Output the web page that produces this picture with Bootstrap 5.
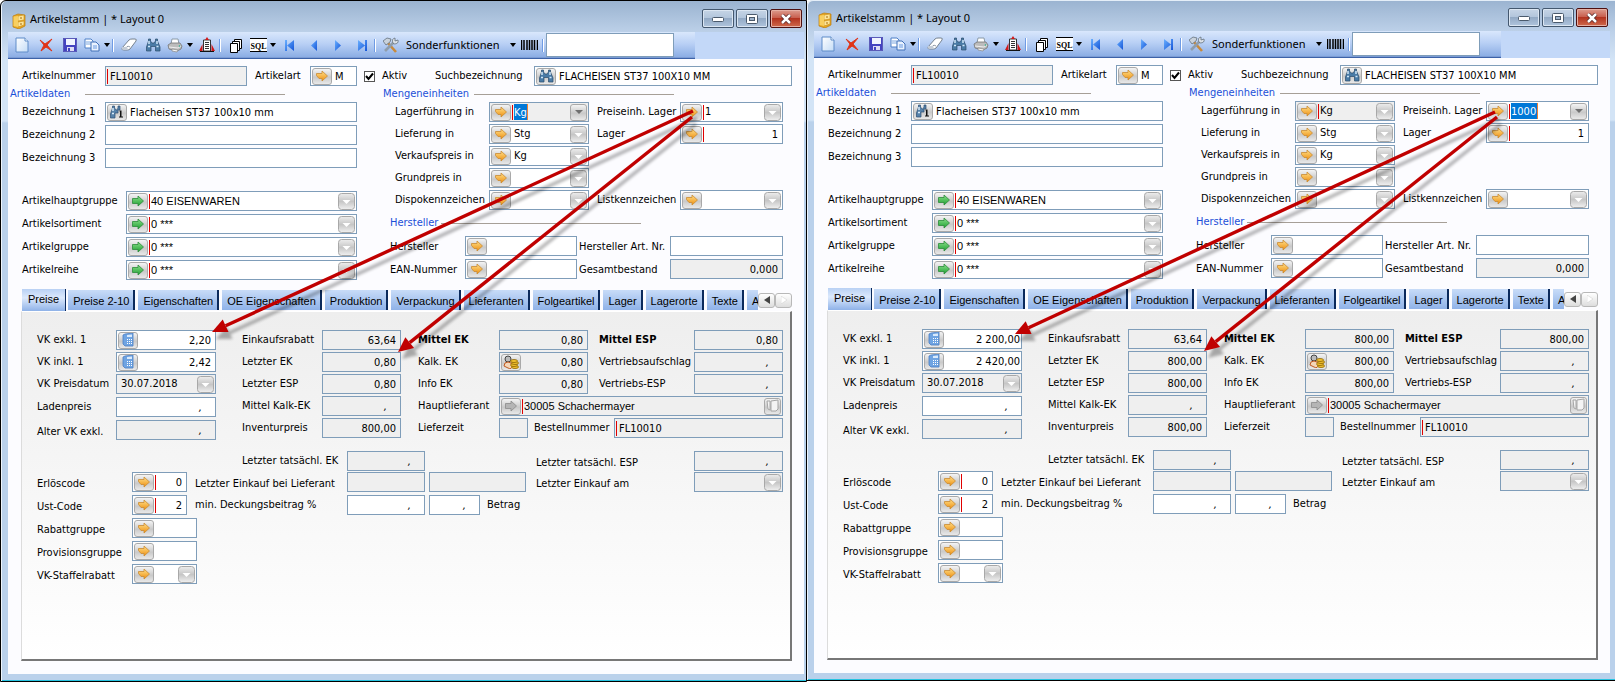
<!DOCTYPE html>
<html lang="de">
<head>
<meta charset="utf-8">
<meta name="viewport" content="width=device-width, initial-scale=1">
<title>Artikelstamm</title>
<link href="https://cdn.jsdelivr.net/npm/bootstrap@5.3.0/dist/css/bootstrap.min.css" rel="stylesheet">
<style>
body{font:11px/14px "DejaVu Sans Condensed","DejaVu Sans",sans-serif;color:#000;background:#fff}
label{white-space:nowrap}
button{font:inherit;color:inherit;padding:0;background:none;border:0}
.desk{display:grid;grid-template-columns:minmax(0,807fr) minmax(0,808fr);min-height:100vh}
.win{background:linear-gradient(#9ab3d0,#bdd1e9 32px,#d3e4f6 60px,#d3e4f6 120px,#bad1eb 122px);position:relative;border-bottom:1px solid #000}
.win-a{border-top:1px solid #000;border-left:1px solid #000;border-right:1px solid #000;padding:0 2px 0 7px;border-radius:6px 0 0 0;box-shadow:inset 1px 0 #eef5fc,inset 0 -1px #27c3e0}
.win-b{padding:0 5px 0 7px;margin-bottom:1px;box-shadow:inset 1px 0 #eef5fc,inset 0 1px #e4eef8,inset 0 -1px #27c3e0;border-radius:6px 0 0 0}
.win-body{background:#fcfcff;margin-bottom:7px}
.bar-title{height:31px;padding:8px 2px 0 4px;font:11px/20px "Noto Sans",sans-serif}
.capt{width:32px;height:19px;border:1px solid #44586f;border-radius:2px;background:linear-gradient(#c6d5e6,#b3c6dc 45%,#93aac5 50%,#b0c5dd);box-shadow:inset 0 0 0 1px #dbe6f2;display:grid;place-items:center}
.capt-x{border-color:#4e1010;background:linear-gradient(#dc9c8e,#c9604f 45%,#b33420 50%,#cf6a4c);box-shadow:inset 0 0 0 1px #e6b0a4}
.capts{gap:2px}
.tools{background:#c3d8f8;height:27px}
.strip{width:687px;background:linear-gradient(#d9e7fc,#b9d0f5 45%,#88abe3);border-bottom:1px solid #3c62a8;padding-left:2px;box-shadow:inset 0 -1px #7c9cd4}
.tb{width:24px;height:26px;display:grid;place-items:center;flex:none}
.tb-n{width:20px}.tb-c{width:10px}
.tsep{width:5px;height:13px;flex:none;border-left:1px solid #6f9be4;box-shadow:inset 1px 0 #fff}
.tb-text{font:11px/24px "Noto Sans",sans-serif;padding:0 8px 0 3px}
.tb-search{width:128px;height:24px;border:1px solid #7f9db9;background:#fff;margin-left:-1px;padding:0 4px}
.tri{width:0;height:0;border:3px solid transparent;border-top:4px solid #000;border-bottom:0}
.rw{display:grid;align-items:center;min-height:20px}
.stack2{display:grid;row-gap:2px}.stack3{display:grid;row-gap:3px}
.r-top{grid-template-columns:83px 142fr 63px 47px 25px 53px 99px 258fr;padding:0 12px 0 14px;margin-top:7px}
.upper{display:grid;grid-template-columns:347fr 400fr;column-gap:26px;padding:0 21px 0 2px;align-items:start}
.r-b{grid-template-columns:83px 1fr;padding-left:12px}
.r-g{grid-template-columns:104px 1fr;padding-left:12px}
.r-m{grid-template-columns:94px 100fr 91px 103fr;padding-left:12px}
.r-h{grid-template-columns:75px 112fr 93px 113fr;padding-left:7px}
.r-h label{padding-top:2px}
.hd{display:flex;align-items:center;height:16px;color:#1b4fd8}
.hd::after{content:"";width:200px;border-top:1px solid #a69f97}
.hd span{width:75px}.hd-m span{width:91px}
.hd-h{height:26px;padding-left:7px}.hd-h span{width:51px}
.gap-rows{margin-top:23px}
.g8{padding-left:8px}.g2{padding-left:2px}.g11{padding-left:11px}.g6{padding-left:6px}.g10{padding-left:10px}.g7{padding-left:7px}
.fld{display:flex;align-items:center;height:20px;border:1px solid #7f9db9;background:#fff;min-width:0;padding:0 1px}
.fld-ro{background:#efefef}
.fld input,.fld select{flex:1 1 0;min-width:0;width:0;height:16px;border:0;background:transparent;padding:0 3px;font:inherit;color:#000;outline:0;appearance:none}
.fld select{background:no-repeat right center/17px 17px url("data:image/svg+xml,%3Csvg xmlns='http://www.w3.org/2000/svg' viewBox='0 0 17 17'%3E%3Cdefs%3E%3ClinearGradient id='g' x2='0' y2='1'%3E%3Cstop stop-color='%23ededed'/%3E%3Cstop offset='.5' stop-color='%23c6c6c6'/%3E%3Cstop offset='1' stop-color='%23f0f0f0'/%3E%3C/linearGradient%3E%3C/defs%3E%3Crect x='.5' y='.5' width='16' height='16' rx='3' fill='url(%23g)' stroke='%23a8a8a8'/%3E%3Cpath d='M4.500 7h8L8.500 11z' fill='%23fff'/%3E%3C/svg%3E");height:17px}
.fld-num input{text-align:right}
.fld-edge input{padding-right:0}
.fld-comma input{text-align:right;padding-right:12px;font-style:italic}
.fld-ar{font-family:"Liberation Sans",sans-serif}
.rb{width:1px;height:15px;background:#e00000;flex:none;margin-left:1px}
.rb + input,.rb + select{padding-left:1px}
.rb-first{margin-left:0}
.rb-first + input{padding-left:2px}
.ib,.ddb{flex:none;width:20px;height:17px;border:1px solid #a9a9a9;border-radius:3px;background:linear-gradient(#f4f4f4,#c9c9c9 55%,#e9e9e9);display:grid;place-items:center}
.ddb{width:17px;margin-left:auto}
.ddb .tri{border-top-color:#707070;border-width:4px 4px 0}
.fld .marked{flex:none;width:auto;background:#0078d7;color:#fff;padding:0;border-right:1px solid #f08030;margin-left:1px}
.chk{width:11px;height:11px;margin:0 auto;appearance:none;border:1px solid #555;background:#fff;display:block}
.chk:checked{background:#fff url("data:image/svg+xml,%3Csvg xmlns='http://www.w3.org/2000/svg' viewBox='0 0 9 9'%3E%3Cpath d='M1 4l2.500 3L8 1.500' fill='none' stroke='%23000' stroke-width='2'/%3E%3C/svg%3E")}
.tabs-row{margin:9px 12px 0 14px;height:22px}
.tabbar{overflow:hidden;gap:3px;font:11px/16px "Liberation Sans",sans-serif}
.tabx{flex:none;height:20px;padding:3px 4px 1px 5px;background:linear-gradient(#c8dcf8,#8fb2e8);border-right:2px solid #0b2a5c;white-space:nowrap}
.tabx-on{height:22px;align-self:flex-start;padding:2px 6px 4px 6px;background:linear-gradient(#b9d1f4,#dce9fc 40%,#8fb2e8);border-right-width:1px;margin-right:-1px}
.tscroll{width:17px;height:15px;border:1px solid #b8b8b8;border-radius:3px;background:linear-gradient(#fff,#ddd);display:grid;place-items:center}
.panel{margin:0 12px 13px 13px;border:1px solid #dcdcdc;border-right:2px solid #777;border-bottom:2px solid #777;border-top:1px solid #fff;background:linear-gradient(#eee,#fff);padding:18px 7px 20px 15px}
.prices{display:grid;grid-template-columns:179fr 26px 159fr 17px 365fr;align-items:start}
.p1{grid-template-columns:79px 1fr}.p2{grid-template-columns:80px 1fr}
.p3{grid-template-columns:81px 89fr 106px 89fr}.p3w{grid-template-columns:81px 1fr}.p3l{grid-template-columns:81px 29px 86px 1fr}
.p1:nth-child(n+4){margin-top:1px}
.lower{margin-top:11px}
.l1{grid-template-columns:310px 78px 269px 1fr;margin-bottom:1px}.l1 label:first-child{padding-left:205px}.l1 label:nth-of-type(2){padding:4px 0 0 111px}
.l2{grid-template-columns:95px 55px 160px 78px 101px 168px 1fr}
.l2 label{padding-top:4px}
.l3{grid-template-columns:95px 55px 160px 78px 55px 1fr}
.l4{grid-template-columns:95px 65px}
.l3 label:first-child,.l4 label{padding-top:4px}
.ml-f{margin-left:4px}
.arrows{position:absolute;left:0;top:0;width:100%;height:100%;pointer-events:none;overflow:visible}
</style>
</head>
<body>
<svg width="0" height="0" class="position-absolute" aria-hidden="true">
<defs>
<linearGradient id="gold" x2="0" y2="1"><stop stop-color="#ffe08a"/><stop offset="1" stop-color="#ee8f10"/></linearGradient>
<linearGradient id="green" x2="0" y2="1"><stop stop-color="#8be08b"/><stop offset="1" stop-color="#1fa032"/></linearGradient>
<linearGradient id="blue" x2="1" y2="1"><stop stop-color="#6ab0ff"/><stop offset="1" stop-color="#1455d8"/></linearGradient>
<linearGradient id="paper" x2="1" y2="1"><stop stop-color="#fff"/><stop offset="1" stop-color="#c4dcf6"/></linearGradient>
<filter id="soft" x="-10%" y="-10%" width="120%" height="120%"><feGaussianBlur stdDeviation="1.5"/></filter>
<symbol id="i-or" viewBox="0 0 14 12"><path d="M1.500 3.500H7V1l5.500 5L7 11V8.500H4L1.500 5.500z" fill="url(#gold)" stroke="#c98a34" stroke-width=".8"/></symbol>
<symbol id="i-gr" viewBox="0 0 14 12"><path d="M1.500 3.500H7V1l5.500 5L7 11V8.500H1.500z" fill="url(#green)" stroke="#2b8a3a" stroke-width=".8"/></symbol>
<symbol id="i-ga" viewBox="0 0 14 12"><path d="M1.500 3.500H7V1l5.500 5L7 11V8.500H1.500z" fill="#b5b5b5" stroke="#8b8b8b" stroke-width=".8"/></symbol>
<symbol id="i-bino" viewBox="0 0 16 14"><path d="M3.500 1h2v2l1.500 2h2l1.500-2V1h2v2l2.500 6v4h-4.500V8.500H6V13H1.500V9l2-6z" fill="#4a7ba6" stroke="#2a4a6a" stroke-width=".7"/><path d="M3 8.500h2M11.500 8.500h2M4 3v3M12 3v3" stroke="#cfe6f8" stroke-width="1.500"/></symbol>
<symbol id="i-bino1" viewBox="0 0 16 14"><path d="M3.500 1h2v2l1.500 2h1l1-2V1h2v4H9v3H6v5H1.500V9l2-6z" fill="#5682aa" stroke="#2c4f74" stroke-width=".7"/><path d="M3 8.500h2M4 3v3" stroke="#d8ebfa" stroke-width="1.500"/><path d="M10.500 5.500h2v6H14v1h-4v-1h1v-5h-.5z" fill="#111"/></symbol>
<symbol id="i-calc" viewBox="0 0 14 14"><path d="M4 1l8-1v13H4L2 11V2z" fill="#6fa4e2" stroke="#4a7ec4" stroke-width=".8"/><path d="M6 2l5-.5v2.500H6z" fill="#d9eafc"/><path d="M6 6.500h5M6 8.500h5M6 10.500h5" stroke="#fff" stroke-dasharray="1 1"/></symbol>
<symbol id="i-coin" viewBox="0 0 16 14"><circle cx="5" cy="4" r="3" fill="#bbb" stroke="#444"/><path d="M1 11q0-4 4-4t4 4-4 2-4-2z" fill="#f3d5b8" stroke="#c05a20"/><g fill="#f2c230" stroke="#8d6504" stroke-width=".8"><ellipse cx="12" cy="12" rx="3.500" ry="1.500"/><ellipse cx="11" cy="10" rx="3.500" ry="1.500"/><ellipse cx="12" cy="8" rx="3.500" ry="1.500"/><ellipse cx="11" cy="6" rx="3.500" ry="1.500"/></g></symbol>
<symbol id="i-book" viewBox="0 0 14 14"><path d="M1 2h3v9L2 10zM5 2l7-1v9l-2 2H5z" fill="#f4f4f4" stroke="#a5a5a5"/></symbol>
<symbol id="i-app" viewBox="0 0 14 16"><path d="M1 3l5-2 7 1v11l-6 3-6-2z" fill="#e9a820" stroke="#b87a10" stroke-width=".7"/><path d="M6 3l6-1v5l-6 1zM6 9l6-1v4l-6 2z" fill="#fde59a" stroke="#c98d18" stroke-width=".6"/><path d="M8 5h2M8 11h2" stroke="#a66a08"/><path d="M1.500 3.500L6 3v11l-4.500-1z" fill="#f8cf60"/></symbol>
<symbol id="i-new" viewBox="0 0 14 16"><path d="M1 1h9l3 3v11H1z" fill="url(#paper)" stroke="#5f8cc8"/><path d="M10 1v3h3" fill="#fff" stroke="#5f8cc8"/></symbol>
<symbol id="i-del" viewBox="0 0 14 14"><path d="M1 2l5 4 7-5-5 6 5 6-6-4-5 4 3-6z" fill="#e03418" stroke="#e03418"/></symbol>
<symbol id="i-save" viewBox="0 0 14 14"><path d="M0 0h14v14H0z" fill="#4343c0"/><path d="M3 1h9v6H3z" fill="#f0f4ff"/><path d="M4 9h7v5H4z" fill="#dcdcf4"/><path d="M5 10h2v3H5z" fill="#4343c0"/><path d="M.5.5h13v13H.5z" fill="none" stroke="#5b5bb8"/></symbol>
<symbol id="i-copy" viewBox="0 0 16 14"><path d="M1 1h6l2 2v7H1z" fill="#fff" stroke="#4f80c8"/><path d="M2 4h5M2 6h5" stroke="#7ba6e0"/><path d="M7 4h5l3 3v6H7z" fill="#e9f2ff" stroke="#4070b8"/><path d="M9 8h4M9 10h4" stroke="#6a9ae0"/></symbol>
<symbol id="i-erase" viewBox="0 0 16 14"><path d="M1 10l7-8q1-1 3-1h3q2 0 1 2l-6 8q-1 1-3 1H3q-3 0-2-2z" fill="#fff" stroke="#76828f"/><path d="M1 9q3 0 5-.5L7 12H3q-3 0-2-3z" fill="#c4ccd6"/><path d="M6 8.500q2-.5 3 .500" fill="none" stroke="#8d98a6"/></symbol>
<symbol id="i-print" viewBox="0 0 16 15"><path d="M5 1h6l1 5H4z" fill="#fff" stroke="#8a9aa8"/><path d="M1 7l3-2h9l2 3-1 3-4 2-8-2z" fill="#bcbcbc" stroke="#757575" stroke-width=".8"/><path d="M2 9l9 1 3-2" fill="none" stroke="#eee"/><path d="M5 11l6 1-1 2-5-1z" fill="#f4f4f4" stroke="#888" stroke-width=".7"/><circle cx="12.500" cy="8" r=".8" fill="#2a8"/></symbol>
<symbol id="i-rep" viewBox="0 0 16 16"><path d="M4.500 3h7v11h-7z" fill="#fff" stroke="#333"/><path d="M8 0l2 3H6z" fill="#d21818"/><path d="M6 5.500h4M6 7.500h4M6 9.500h4M6 11.500h4" stroke="#333"/><path d="M3.500 7v7H0zM12.500 7v7H16z" fill="#d21818"/><path d="M1 14.500h14" stroke="#111"/></symbol>
<symbol id="i-stack" viewBox="0 0 14 15"><g fill="#fff" stroke="#000"><path d="M5.500 1.500h7v9h-7z"/><path d="M3.500 3.500h7v9h-7z"/><path d="M1.500 5.500h7v9h-7z"/></g></symbol>
<symbol id="i-bar" viewBox="0 0 17 10"><path d="M.5 0v10M3 0v10M6 0v10M8.500 0v10M11 0v10M13.500 0v10M16.500 0v10" stroke="#000" stroke-width="1.500"/></symbol>
<symbol id="i-prev" viewBox="0 0 10 13"><path d="M8 1v11L2 6.500z" fill="url(#blue)"/></symbol>
<symbol id="i-next" viewBox="0 0 10 13"><path d="M2 1v11l6-5.500z" fill="url(#blue)"/></symbol>
<symbol id="i-first" viewBox="0 0 10 13"><path d="M0 1h2v11H0zM9 1v11L2 6.500z" fill="url(#blue)"/></symbol>
<symbol id="i-last" viewBox="0 0 10 13"><path d="M8 1h2v11H8zM1 1v11l7-5.500z" fill="url(#blue)"/></symbol>
<symbol id="i-tool" viewBox="0 0 16 16"><path d="M4 5l9 10" stroke="#c88a3c" stroke-width="2.600"/><path d="M0 4l4-3 4 1-1 3-4 3z" fill="#c9d2dc" stroke="#66727f" stroke-width=".8"/><path d="M2 14L11 5" stroke="#8f9dab" stroke-width="2.600"/><path d="M10 6q-2-4 2-5l0 3 3-1q1 4-4 4z" fill="#dbe1e8" stroke="#66727f" stroke-width=".8"/></symbol>
</defs>
</svg>
<main class="desk" id="desk"></main>

<script>
const esc = s => String(s).replace(/&/g, '&amp;').replace(/"/g, '&quot;');
const svg = (n, w, h) => `<svg width="${w}" height="${h}" aria-hidden="true"><use href="#i-${n}"/></svg>`;
const iconSize = {or: [14, 12], gr: [14, 12], ga: [14, 12], bino: [16, 14], bino1: [16, 14], calc: [14, 14], coin: [16, 14]};

// One bordered field: optional icon button, red marker, value, optional drop-down.
function field(id, o = {}) {
  const cls = ['fld', o.ro && 'fld-ro', o.num && 'fld-num', o.edge && 'fld-edge', o.v === ',' && 'fld-comma', o.ar && 'fld-ar', o.cls].filter(Boolean).join(' ');
  const v = esc(o.v || '');
  let h = `<div class="${cls}">`;
  if (o.ic) h += `<button type="button" class="ib" aria-label="Auswahl">${svg(o.ic, ...iconSize[o.ic])}</button>`;
  if (o.bar) h += `<i class="rb${o.ic ? '' : ' rb-first'}"></i>`;
  if (o.mark) h += `<input id="${id}" class="marked" value="${v}" style="width:${Math.round(v.length * 6.5) + 1}px"><button type="button" class="ddb" aria-label="Liste"><span class="tri"></span></button>`;
  else if (o.dd) h += `<select id="${id}"><option>${v}</option></select>`;
  else h += `<input id="${id}" value="${v}"${o.ro ? ' readonly' : ''}>`;
  if (o.book) h += `<button type="button" class="ddb" aria-label="Karte">${svg('book', 14, 14)}</button>`;
  return h + '</div>';
}

function tool(icon, w, h, label, cls = '') {
  return `<button type="button" class="tb ${cls}" aria-label="${label}">${svg(icon, w, h)}</button>`;
}
const drop = '<button type="button" class="tb tb-c" aria-label="Mehr"><span class="tri"></span></button>';
const sep = '<span class="tsep"></span>';

function windowHtml(p, d) {
  let n = 0;
  const pair = (text, o, lc = '') => { const id = p + (++n); return `<label for="${id}" class="${lc}">${text}</label>${field(id, o)}`; };
  const lone = o => { const id = p + (++n); return field(id, o).replace(`id="${id}"`, `id="${id}" aria-label="Wert"`); };
  const row = (cls, ...c) => `<div class="rw ${cls}">${c.join('')}</div>`;
  const or = (o = {}) => ({ic: 'or', ...o});
  const ro = (v, o = {}) => ({ro: 1, num: 1, v, ...o});
  const tabs = ['Preise 2-10', 'Eigenschaften', 'OE Eigenschaften', 'Produktion', 'Verpackung', 'Lieferanten', 'Folgeartikel', 'Lager', 'Lagerorte', 'Texte', 'A'];
  const arrow = (a, w) => {
    const [x1, y1, x2, y2] = a, l = Math.hypot(x2 - x1, y2 - y1), ux = (x2 - x1) / l, uy = (y2 - y1) / l;
    const bx = x2 - ux * 15, by = y2 - uy * 15;
    return `<path d="M${x1} ${y1}L${bx} ${by}" stroke-width="${w}"/><path stroke="none" d="M${x2} ${y2}L${bx - uy * 7} ${by + ux * 7}L${bx + uy * 7} ${by - ux * 7}z"/>`;
  };
  const arrows = d.arrows.map(a => arrow(a, 3.4)).join('');
  return `<section class="win win-${p} d-flex flex-column">
  <header class="bar-title d-flex align-items-start">
    <span class="me-1 pt-1 lh-1">${svg('app', 14, 16)}</span><span>Artikelstamm | * Layout 0</span>
    <span class="capts d-flex ms-auto">
      <button type="button" class="capt" aria-label="Minimieren"><svg width="12" height="6"><rect x=".5" y="1.500" width="11" height="4" rx="1" fill="#fff" stroke="#4a5a6c"/></svg></button>
      <button type="button" class="capt" aria-label="Maximieren"><svg width="12" height="10"><rect x=".5" y=".5" width="11" height="9" rx="1" fill="#fff" stroke="#4a5a6c"/><rect x="3.500" y="3.500" width="5" height="3" fill="#9fb4cc" stroke="#4a5a6c"/></svg></button>
      <button type="button" class="capt capt-x" aria-label="Schließen"><svg width="12" height="10"><path d="M2 1l8 8M10 1L2 9" stroke="#4e2020" stroke-width="4"/><path d="M2 1l8 8M10 1L2 9" stroke="#fff" stroke-width="2.500"/></svg></button>
    </span>
  </header>
  <div class="win-body d-flex flex-column flex-grow-1">
    <div class="tools d-flex"><div class="strip d-flex align-items-center">
      ${tool('new', 14, 16, 'Neu')}${tool('del', 14, 14, 'Löschen')}${tool('save', 14, 14, 'Speichern')}${tool('copy', 16, 14, 'Kopieren', 'tb-n')}${drop}${sep}
      ${tool('erase', 16, 14, 'Leeren')}${tool('bino', 16, 14, 'Suchen')}${tool('print', 16, 15, 'Drucken', 'tb-n')}${drop}${tool('rep', 16, 16, 'Bericht')}${sep}
      ${tool('stack', 14, 15, 'Fenster')}<button type="button" class="tb tb-n" aria-label="SQL"><svg width="17" height="14"><path d="M0 0h17v1H0zM0 13h17v1H0z"/><path d="M0 1h17v12H0z" fill="#fff"/><text x="8.500" y="10.500" text-anchor="middle" font-family="Liberation Serif, serif" font-size="8" font-weight="bold">SQL</text></svg></button>${drop}
      ${tool('first', 10, 13, 'Erster')}${tool('prev', 10, 13, 'Zurück')}${tool('next', 10, 13, 'Weiter')}${tool('last', 10, 13, 'Letzter')}${sep}
      ${tool('tool', 16, 16, 'Werkzeuge')}<button type="button" class="tb-text">Sonderfunktionen</button>${drop}${tool('bar', 17, 10, 'Barcode')}${sep}
      <input class="tb-search" aria-label="Suche">
    </div></div>
    ${row('r-top', pair('Artikelnummer', {ro: 1, bar: 1, v: 'FL10010'}), pair('Artikelart', or({v: 'M'}), 'g8'),
      `<input type="checkbox" class="chk" id="${p}akt" checked><label for="${p}akt">Aktiv</label>`, pair('Suchbezeichnung', {ic: 'bino', v: 'FLACHEISEN ST37 100X10 MM'}))}
    <div class="upper">
      <div>
        <div class="hd"><span>Artikeldaten</span></div>
        <div class="stack3">
          ${row('r-b', pair('Bezeichnung 1', {ic: 'bino1', v: 'Flacheisen ST37 100x10 mm'}))}
          ${row('r-b', pair('Bezeichnung 2', {}))}${row('r-b', pair('Bezeichnung 3', {}))}
        </div>
        <div class="stack3 gap-rows">
          ${[['Artikelhauptgruppe', '40 EISENWAREN'], ['Artikelsortiment', '0 ***'], ['Artikelgruppe', '0 ***'], ['Artikelreihe', '0 ***']].map(([t, v]) => row('r-g', pair(t, {ic: 'gr', bar: 1, dd: 1, ar: 1, v}))).join('')}
        </div>
      </div>
      <div>
        <div class="hd hd-m"><span>Mengeneinheiten</span></div>
        <div class="stack2">
          ${row('r-m', pair('Lagerführung in', or({ro: 1, bar: 1, dd: 1, v: 'Kg', mark: d.markUnit})), pair('Preiseinh. Lager', or({bar: 1, dd: 1, v: d.unit, mark: !d.markUnit}), 'g8'))}
          ${row('r-m', pair('Lieferung in', or({dd: 1, v: 'Stg'})), pair('Lager', or({bar: 1, num: 1, v: '1'}), 'g8'))}
          ${row('r-m', pair('Verkaufspreis in', or({dd: 1, v: 'Kg'})))}
          ${row('r-m', pair('Grundpreis in', or({dd: 1})))}
          ${row('r-m', pair('Dispokennzeichen', or({dd: 1})), pair('Listkennzeichen', or({dd: 1}), 'g8'))}
        </div>
        <div class="hd hd-h"><span>Hersteller</span></div>
        <div class="stack3">
          ${row('r-h', pair('Hersteller', or()), pair('Hersteller Art. Nr.', {}, 'g2'))}
          ${row('r-h', pair('EAN-Nummer', or()), pair('Gesamtbestand', ro('0,000'), 'g2'))}
        </div>
      </div>
    </div>
    <div class="tabs-row d-flex align-items-center">
      <div class="tabbar d-flex align-items-center flex-grow-1 h-100" role="tablist">
        <button type="button" role="tab" class="tabx tabx-on">Preise</button>${tabs.map(t => `<button type="button" role="tab" class="tabx">${t}</button>`).join('')}
      </div>
      <div class="d-flex flex-shrink-0">
        <button type="button" class="tscroll" aria-label="Zurück"><svg width="6" height="8"><path d="M6 0v8L0 4z" fill="#444"/></svg></button>
        <button type="button" class="tscroll" aria-label="Weiter"><svg width="6" height="8"><path d="M0 0v8l6-4z" fill="#fff" stroke="#ccc" stroke-width=".5"/></svg></button>
      </div>
    </div>
    <div class="panel flex-grow-1">
      <div class="prices">
        <div class="stack2">
          ${row('p1', pair('VK exkl. 1', {ic: 'calc', num: 1, edge: d.edge, v: d.exkl}))}
          ${row('p1', pair('VK inkl. 1', {ic: 'calc', num: 1, edge: d.edge, v: d.inkl}))}
          ${row('p1', pair('VK Preisdatum', {ro: 1, dd: 1, v: '30.07.2018'}))}
          ${row('p1', pair('Ladenpreis', {v: ','}))}
          ${row('p1', pair('Alter VK exkl.', ro(','), 'pt-1'))}
        </div><div></div>
        <div class="stack2">
          ${[['Einkaufsrabatt', '63,64'], ['Letzter EK', d.ek], ['Letzter ESP', d.ek], ['Mittel Kalk-EK', ','], ['Inventurpreis', '800,00']].map(([t, v]) => row('p2', pair(t, ro(v)))).join('')}
        </div><div></div>
        <div class="stack2">
          ${row('p3', pair('Mittel EK', ro(d.ek), 'fw-bold'), pair('Mittel ESP', ro(d.ek), 'fw-bold g11'))}
          ${row('p3', pair('Kalk. EK', ro(d.ek, {ic: 'coin'})), pair('Vertriebsaufschlag', ro(','), 'g11'))}
          ${row('p3', pair('Info EK', ro(d.ek)), pair('Vertriebs-ESP', ro(','), 'g11'))}
          ${row('p3w', pair('Hauptlieferant', {ro: 1, ic: 'ga', bar: 1, ar: 1, book: 1, v: '30005 Schachermayer'}))}
          ${row('p3l', pair('Lieferzeit', {ro: 1}), pair('Bestellnummer', {ro: 1, bar: 1, v: 'FL10010'}, 'g6'))}
        </div>
      </div>
      <div class="lower">
        ${row('l1', pair('Letzter tatsächl. EK', ro(',')), pair('Letzter tatsächl. ESP', ro(',')))}
        <div class="stack3">
          ${row('l2', pair('Erlöscode', or({bar: 1, num: 1, v: '0'})), pair('Letzter Einkauf bei Lieferant', {ro: 1}, 'g8'), lone({ro: 1, cls: 'ml-f'}), pair('Letzter Einkauf am', {ro: 1, dd: 1}, 'g10'))}
          ${row('l3', pair('Ust-Code', or({bar: 1, num: 1, v: '2'})), pair('min. Deckungsbeitrag %', {v: ','}, 'g8'), lone({v: ',', cls: 'ml-f'}), `<label for="${p}${n}" class="g7">Betrag</label>`)}
          ${row('l4', pair('Rabattgruppe', or()))}${row('l4', pair('Provisionsgruppe', or()))}${row('l4', pair('VK-Staffelrabatt', or({dd: 1})))}
        </div>
      </div>
    </div>
  </div>
  <svg class="arrows" aria-hidden="true"><g transform="translate(4 7)" stroke="#000" fill="#000" opacity=".3" filter="url(#soft)">${arrows}</g><g stroke="#c00000" fill="#c00000">${arrows}</g></svg>
  </section>`;
}

document.getElementById('desk').innerHTML =
  windowHtml('a', {unit: '1', markUnit: true, exkl: '2,20', inkl: '2,42', ek: '0,80', arrows: [[692, 110, 211, 331], [691, 116, 397, 351]]}) +
  windowHtml('b', {unit: '1000', markUnit: false, edge: true, exkl: '2 200,00', inkl: '2 420,00', ek: '800,00', arrows: [[688, 112, 208, 334], [690, 117, 397, 351]]});
</script>
<script src="https://cdn.jsdelivr.net/npm/bootstrap@5.3.0/dist/js/bootstrap.bundle.min.js"></script>
</body>
</html>
